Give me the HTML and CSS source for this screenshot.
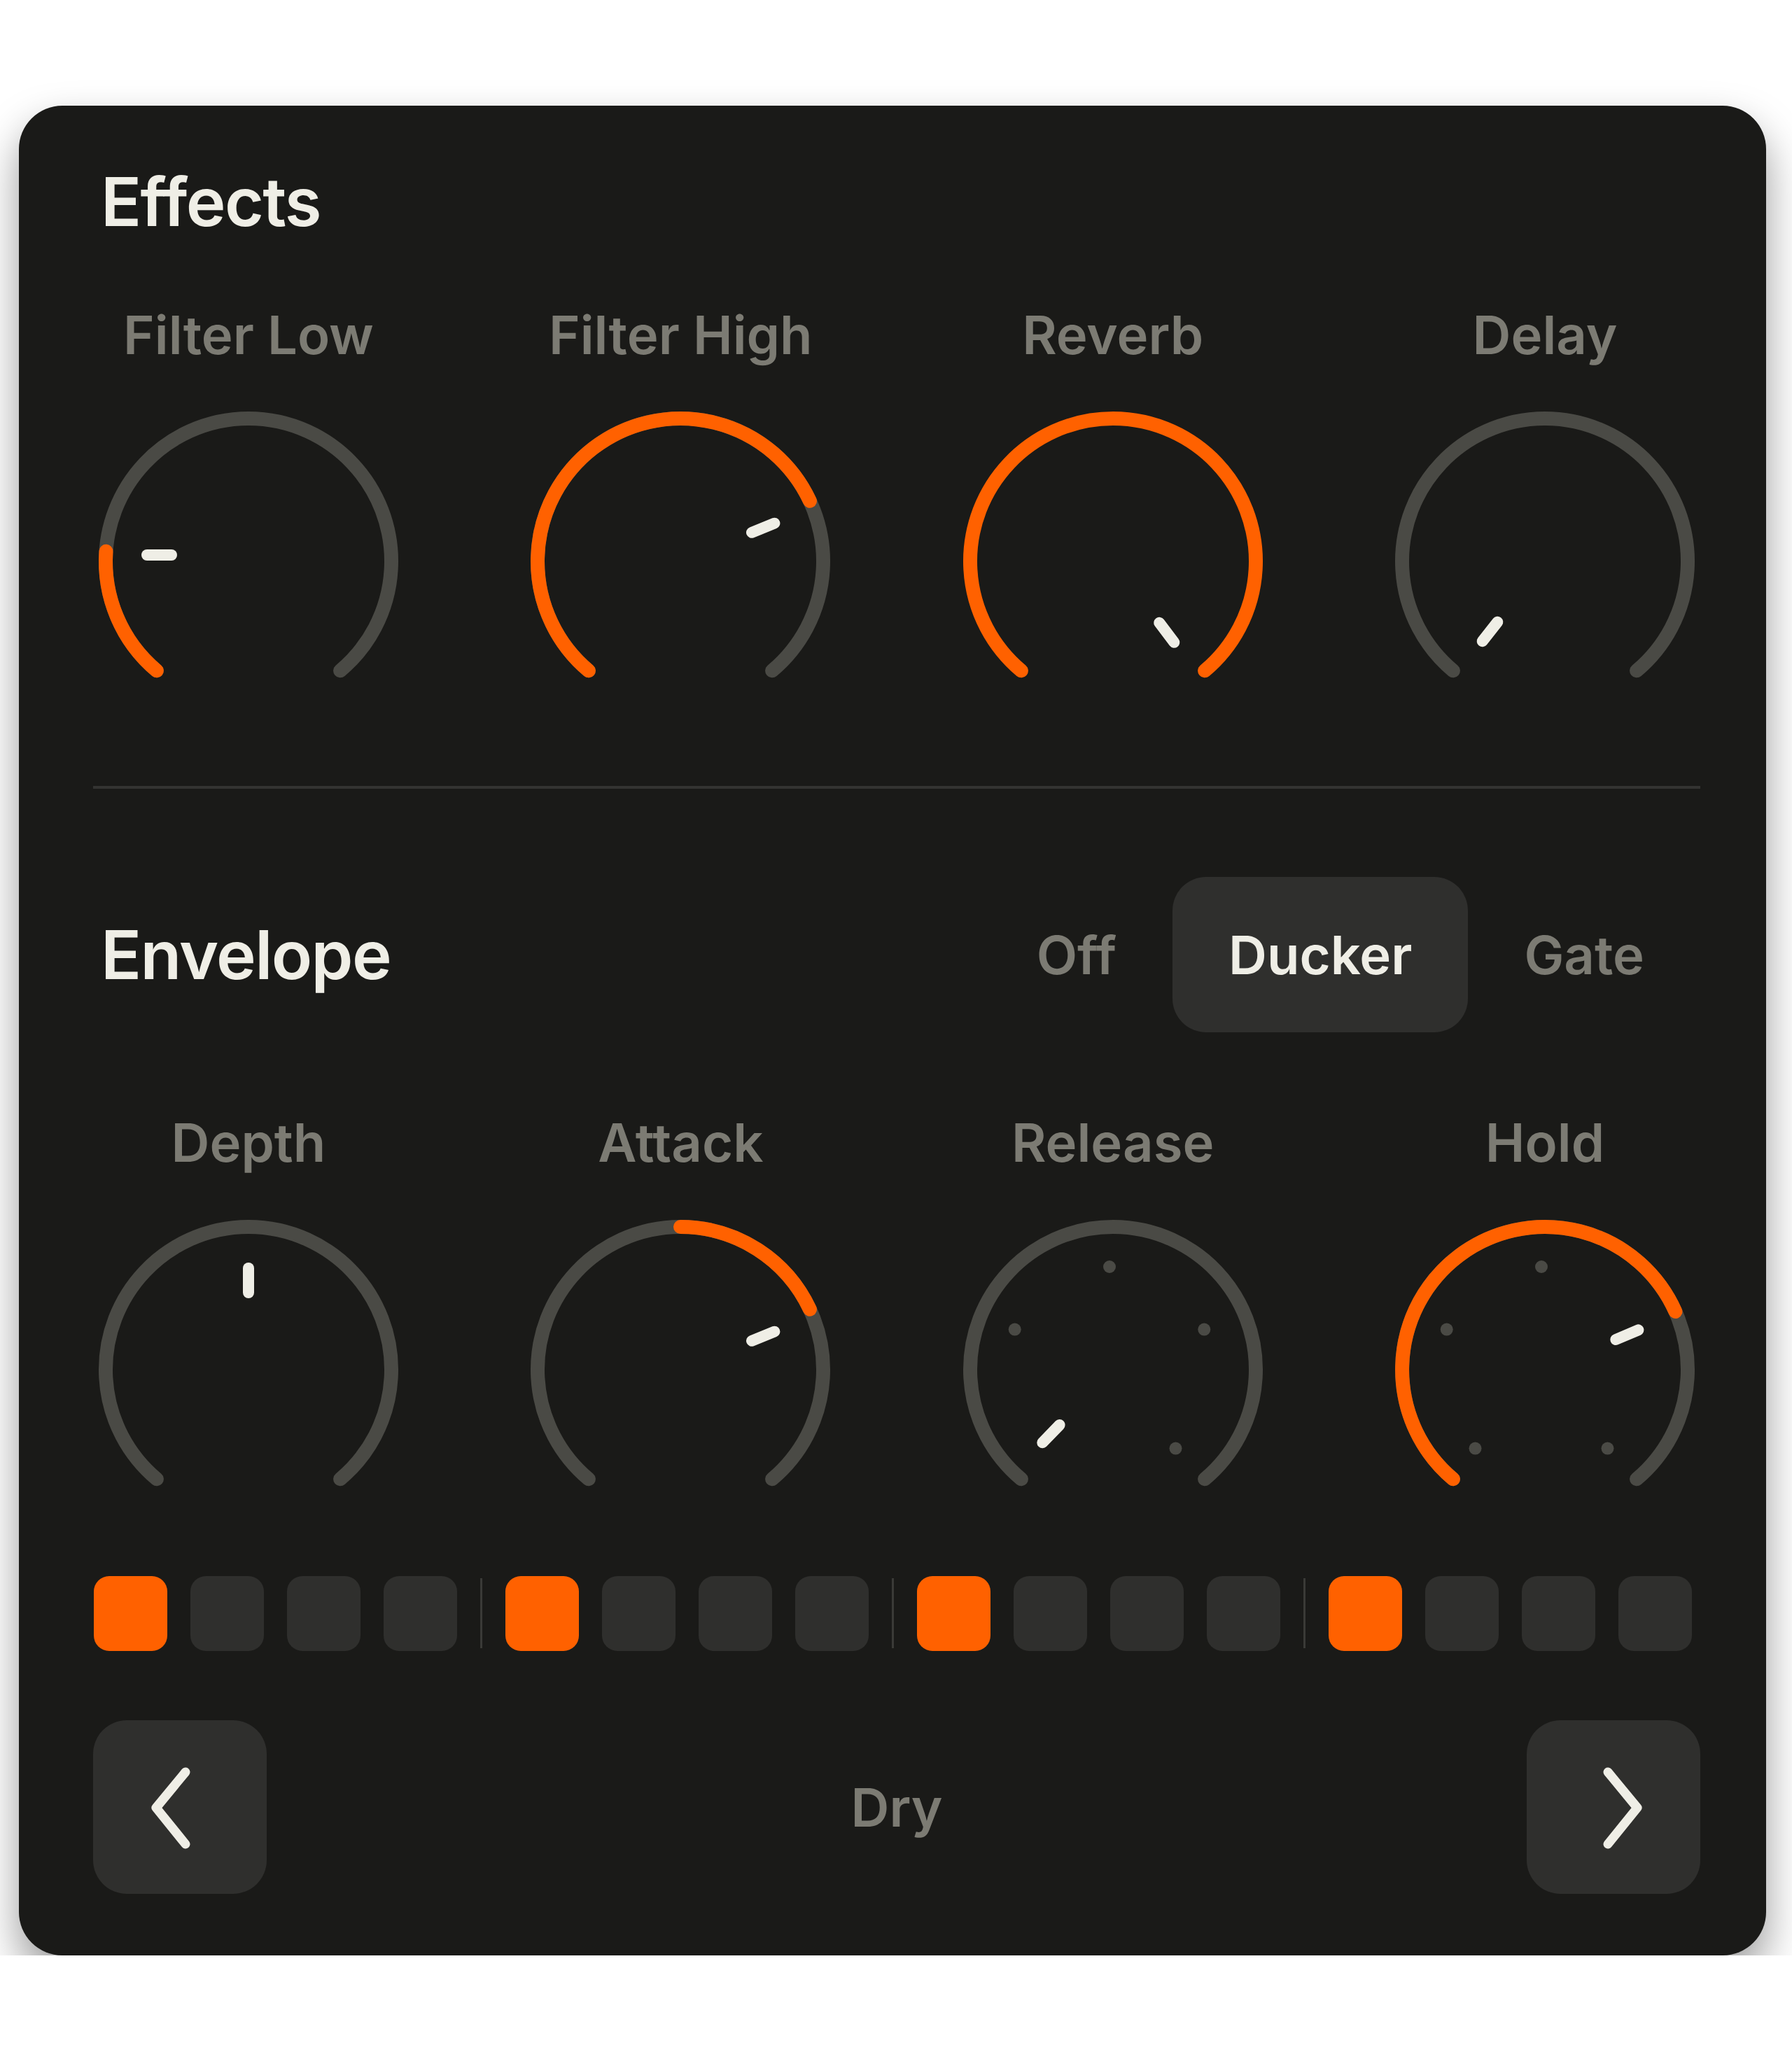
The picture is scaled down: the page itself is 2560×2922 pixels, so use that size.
FILE: index.html
```html
<!DOCTYPE html>
<html lang="en">
<head>
    <meta charset="UTF-8">
    <meta name="viewport" content="width=device-width, initial-scale=1.0">
    <title>Effects</title>
    <link rel="stylesheet" href="styles.css">
</head>
<body>
    <div class="panel">
        <h2 class="title">Effects</h2>

        <div class="knobs">
            <div class="knob">
                <span class="knob-label">Filter Low</span>
                <svg viewBox="0 0 444 400" width="444" height="400">
                    <path class="track" d="M90.9 378.3 A204 204 0 1 1 353.1 378.3"/>
                    <path class="fill" d="M90.9 378.3 A204 204 0 0 1 18.5 207.8"/>
                    <line class="pointer" x1="112" y1="213" x2="77" y2="213"/>
                </svg>
            </div>
            <div class="knob">
                <span class="knob-label">Filter High</span>
                <svg viewBox="0 0 444 400" width="444" height="400">
                    <path class="track" d="M90.9 378.3 A204 204 0 1 1 353.1 378.3"/>
                    <path class="fill" d="M90.9 378.3 A204 204 0 1 1 406.9 135.8"/>
                    <line class="pointer" x1="324" y1="180.8" x2="356.4" y2="167.7"/>
                </svg>
            </div>
            <div class="knob">
                <span class="knob-label">Reverb</span>
                <svg viewBox="0 0 444 400" width="444" height="400">
                    <path class="fill" d="M90.9 378.3 A204 204 0 1 1 353.1 378.3"/>
                    <line class="pointer" x1="288.2" y1="309.8" x2="309.3" y2="337.8"/>
                </svg>
            </div>
            <div class="knob">
                <span class="knob-label">Delay</span>
                <svg viewBox="0 0 444 400" width="444" height="400">
                    <path class="track" d="M90.9 378.3 A204 204 0 1 1 353.1 378.3"/>
                    <line class="pointer" x1="154.3" y1="308.7" x2="132.7" y2="336.3"/>
                </svg>
            </div>
        </div>

        <div class="divider"></div>

        <div class="env-head">
            <h2 class="title">Envelope</h2>
            <div class="seg">
                <button class="seg-btn">Off</button>
                <button class="seg-btn active">Ducker</button>
                <button class="seg-btn">Gate</button>
            </div>
        </div>

        <div class="knobs knobs-env">
            <div class="knob">
                <span class="knob-label">Depth</span>
                <svg viewBox="0 0 444 400" width="444" height="400">
                    <path class="track" d="M90.9 378.3 A204 204 0 1 1 353.1 378.3"/>
                    <line class="pointer" x1="222" y1="112" x2="222" y2="77"/>
                </svg>
            </div>
            <div class="knob">
                <span class="knob-label">Attack</span>
                <svg viewBox="0 0 444 400" width="444" height="400">
                    <path class="track" d="M90.9 378.3 A204 204 0 1 1 353.1 378.3"/>
                    <path class="fill" d="M222 18 A204 204 0 0 1 406.9 135.8"/>
                    <line class="pointer" x1="324" y1="180.8" x2="356.4" y2="167.7"/>
                </svg>
            </div>
            <div class="knob">
                <span class="knob-label">Release</span>
                <svg viewBox="0 0 444 400" width="444" height="400">
                    <path class="track" d="M90.9 378.3 A204 204 0 1 1 353.1 378.3"/>
                    <circle class="tick" cx="81.7" cy="164.6" r="9"/>
                    <circle class="tick" cx="217" cy="75" r="9"/>
                    <circle class="tick" cx="352.3" cy="164.6" r="9"/>
                    <circle class="tick" cx="311.5" cy="334.6" r="9"/>
                    <line class="pointer" x1="145.6" y1="301.1" x2="121.3" y2="326.3"/>
                </svg>
            </div>
            <div class="knob">
                <span class="knob-label">Hold</span>
                <svg viewBox="0 0 444 400" width="444" height="400">
                    <path class="track" d="M90.9 378.3 A204 204 0 1 1 353.1 378.3"/>
                    <path class="fill" d="M90.9 378.3 A204 204 0 1 1 408.4 139"/>
                    <circle class="tick" cx="122.5" cy="334.6" r="9"/>
                    <circle class="tick" cx="81.7" cy="164.6" r="9"/>
                    <circle class="tick" cx="217" cy="75" r="9"/>
                    <circle class="tick" cx="311.5" cy="334.6" r="9"/>
                    <line class="pointer" x1="323.3" y1="179" x2="355.5" y2="165.3"/>
                </svg>
            </div>
        </div>

        <div class="steps">
            <span class="step on"></span><span class="step"></span><span class="step"></span><span class="step"></span>
            <span class="bar"></span>
            <span class="step on"></span><span class="step"></span><span class="step"></span><span class="step"></span>
            <span class="bar"></span>
            <span class="step on"></span><span class="step"></span><span class="step"></span><span class="step"></span>
            <span class="bar"></span>
            <span class="step on"></span><span class="step"></span><span class="step"></span><span class="step"></span>
        </div>

        <div class="nav">
            <button class="nav-btn" aria-label="Previous">
                <svg viewBox="0 0 248 248" width="248" height="248">
                    <polyline class="chevron" points="132,74 90,125 132,177"/>
                </svg>
            </button>
            <span class="preset">Dry</span>
            <button class="nav-btn" aria-label="Next">
                <svg viewBox="0 0 248 248" width="248" height="248">
                    <polyline class="chevron" points="116,74 158,125 116,177"/>
                </svg>
            </button>
        </div>
    </div>
</body>
</html>
```

FILE: styles.css
```css
body {
    margin: 0;
    padding: 151px 0 0 27px;
    background-color: #fff;
    font-family: Inter, 'Liberation Sans', sans-serif;
}
.panel {
    width: 2496px;
    box-sizing: border-box;
    padding: 80px 94px 88px 106px;
    background-color: #1a1a18;
    border-radius: 62px;
    box-shadow: 0 30px 60px rgba(0, 0, 0, 0.4);
}
.title {
    margin: 0;
    padding-left: 11px;
    font-size: 96px;
    line-height: 1.2;
    font-weight: 600;
    letter-spacing: -1.6px;
    color: #efeee6;
}
.knobs {
    display: flex;
    justify-content: space-between;
    margin-top: 87px;
}
.knobs-env {
    margin-top: 112px;
}
.knob {
    display: flex;
    flex-direction: column;
    align-items: center;
    width: 444px;
}
.knob-label {
    font-size: 76px;
    line-height: 1.2;
    font-weight: 600;
    color: #7c7b73;
    margin-bottom: 56px;
}
.knob svg {
    display: block;
}
.track,
.fill {
    fill: none;
    stroke-width: 20;
    stroke-linecap: round;
}
.track {
    stroke: #4a4a45;
}
.fill {
    stroke: #ff6100;
}
.pointer {
    stroke: #efeee6;
    stroke-width: 16;
    stroke-linecap: round;
}
.tick {
    fill: #4a4a45;
}
.divider {
    height: 4px;
    background-color: #333331;
    margin-top: 143px;
}
.env-head {
    display: flex;
    justify-content: space-between;
    align-items: center;
    margin-top: 126px;
}
.seg {
    display: flex;
}
.seg-btn {
    height: 222px;
    padding: 0 80px;
    border: none;
    border-radius: 48px;
    background: none;
    font-family: inherit;
    font-size: 76px;
    font-weight: 600;
    color: #7c7b73;
}
.seg-btn.active {
    background-color: #2f2f2d;
    color: #efeee6;
}
.steps {
    display: flex;
    align-items: center;
    gap: 33px;
    margin-top: 117px;
    padding-left: 1px;
}
.step {
    width: 105px;
    height: 107px;
    border-radius: 22px;
    background-color: #2f2f2d;
}
.step.on {
    background-color: #ff6100;
}
.bar {
    width: 3px;
    height: 100px;
    background-color: #3a3a37;
}
.nav {
    display: flex;
    justify-content: space-between;
    align-items: center;
    margin-top: 99px;
}
.nav-btn {
    width: 248px;
    height: 248px;
    padding: 0;
    border: none;
    border-radius: 48px;
    background-color: #2f2f2d;
}
.nav-btn svg {
    display: block;
}
.chevron {
    fill: none;
    stroke: #efeee6;
    stroke-width: 13;
    stroke-linecap: round;
    stroke-linejoin: round;
}
.preset {
    font-size: 76px;
    font-weight: 600;
    color: #7c7b73;
}
```
